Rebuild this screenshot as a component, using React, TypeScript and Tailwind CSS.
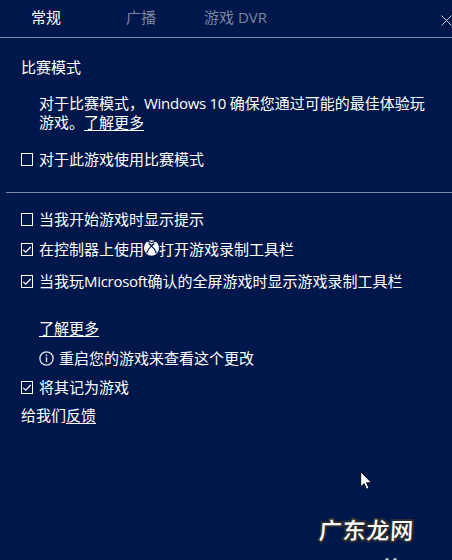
import type { ReactNode } from 'react';

const tabs = [
  { label: '常规', className: 'ml-[31px] w-[95px] text-white' },
  { label: '广播', className: 'w-[78px] text-[#7a859f]' },
  { label: '游戏 DVR', className: 'text-[#7a859f]' },
];

const XboxIcon = () => (
  <svg className="-mt-[3px] h-4 w-[15px] shrink-0" viewBox="0 0 15 16">
    <ellipse cx="7.5" cy="8" rx="7.5" ry="7.7" fill="#fff" />
    <path
      d="M3.4 1.7 Q5 1.3 7.5 2.8 Q10 1.3 11.6 1.7"
      fill="none"
      stroke="#00174b"
      strokeWidth="1.1"
    />
    <path
      d="M4.6 3.6 Q6.2 4.4 7.5 5.9 Q11 9.2 12.3 13.2M10.4 3.6 Q8.8 4.4 7.5 5.9 Q4 9.2 2.7 13.2"
      fill="none"
      stroke="#00174b"
      strokeWidth="1.3"
    />
  </svg>
);

const InfoIcon = () => (
  <svg className="mr-[5px] size-[15px] shrink-0" viewBox="0 0 15 15">
    <circle cx="7.5" cy="7.5" r="6.6" fill="none" stroke="#e3e7ee" strokeWidth="1.3" />
    <path d="M7.5 3.5v1.7M7.5 6.3v5" stroke="#e3e7ee" strokeWidth="1.4" />
  </svg>
);

const Option = ({
  checked = false,
  className,
  children,
}: {
  checked?: boolean;
  className: string;
  children: ReactNode;
}) => (
  <div className={`flex h-5 items-center pl-[21px] ${className}`}>
    <svg className="mt-px mr-[6px] h-[13px] w-3 shrink-0" viewBox="0 0 12 13">
      <rect x="0.5" y="0.5" width="11" height="12" fill="none" stroke="#fff" />
      {checked && (
        <path
          d="M2.3 6.8 L4.7 9.2 L9.7 4"
          fill="none"
          stroke="#fff"
          strokeWidth="1.2"
        />
      )}
    </svg>
    {children}
  </div>
);

const App = () => {
  return (
    <div className="relative h-[560px] w-[452px] overflow-hidden bg-[#00174b] font-['Open_Sans','Noto_Sans_CJK_SC',sans-serif] text-[15px] leading-5 whitespace-nowrap text-white">
      <header className="flex h-[38px] items-start border-b border-[#7f8ba5] pt-[7px]">
        {tabs.map((tab) => (
          <div key={tab.label} className={tab.className}>
            {tab.label}
          </div>
        ))}
        <svg className="mt-[8px] ml-auto h-[11px] w-[11px]" viewBox="0 0 11 11">
          <path d="M0.5 0.5L10.5 10.5M10.5 0.5L0.5 10.5" stroke="#c4cbda" />
        </svg>
      </header>

      <h1 className="mt-[19px] pl-[21px]">比赛模式</h1>
      <p className="mt-[17px] pl-[39px] leading-[19px]">
        对于比赛模式，
        <span className="tracking-[-0.28px]">Windows 10 </span>
        确保您通过可能的最佳体验玩
        <br />
        游戏。
        <a className="underline underline-offset-2">了解更多</a>
      </p>
      <Option className="mt-[17px]">对于此游戏使用比赛模式</Option>

      <hr className="mt-[23px] ml-[6px] border-[#7f8ba5]" />

      <Option className="mt-[16px]">当我开始游戏时显示提示</Option>
      <Option checked className="mt-[10px]">
        在控制器上使用
        <XboxIcon />
        打开游戏录制工具栏
      </Option>
      <Option checked className="mt-[12px]">
        当我玩<span className="tracking-[-0.3px]">Microsoft</span>
        确认的全屏游戏时显示游戏录制工具栏
      </Option>
      <div className="mt-[27px] pl-[39px]">
        <a className="underline underline-offset-2">了解更多</a>
      </div>
      <div className="mt-[10px] flex items-center pl-[39px]">
        <InfoIcon />
        重启您的游戏来查看这个更改
      </div>
      <Option checked className="mt-[9px]">
        将其记为游戏
      </Option>
      <div className="mt-2 pl-[21px]">
        给我们<a className="underline underline-offset-2">反馈</a>
      </div>

      <svg className="absolute top-[471px] left-[360px] h-[20px] w-[13px]" viewBox="0 0 13 20">
        <path
          d="M0.7 0.8V15.8L4.1 12.7L6.5 18.3L9 17.2L6.6 11.8H11.6Z"
          fill="#fff"
          stroke="#000820"
          strokeWidth="1"
        />
      </svg>
      <div className="absolute top-[518px] left-[319px] -skew-x-3 text-[23px] leading-6 font-medium tracking-[0.7px] [paint-order:stroke] [-webkit-text-stroke:4px_#292c2f]">
        广东龙网
      </div>
      <div className="absolute top-[558px] left-[385px] flex gap-1">
        <span className="size-1 rounded-full bg-[#b7bdca]" />
        <span className="size-1 rounded-full bg-[#b7bdca]" />
      </div>
    </div>
  );
};

export default App;
